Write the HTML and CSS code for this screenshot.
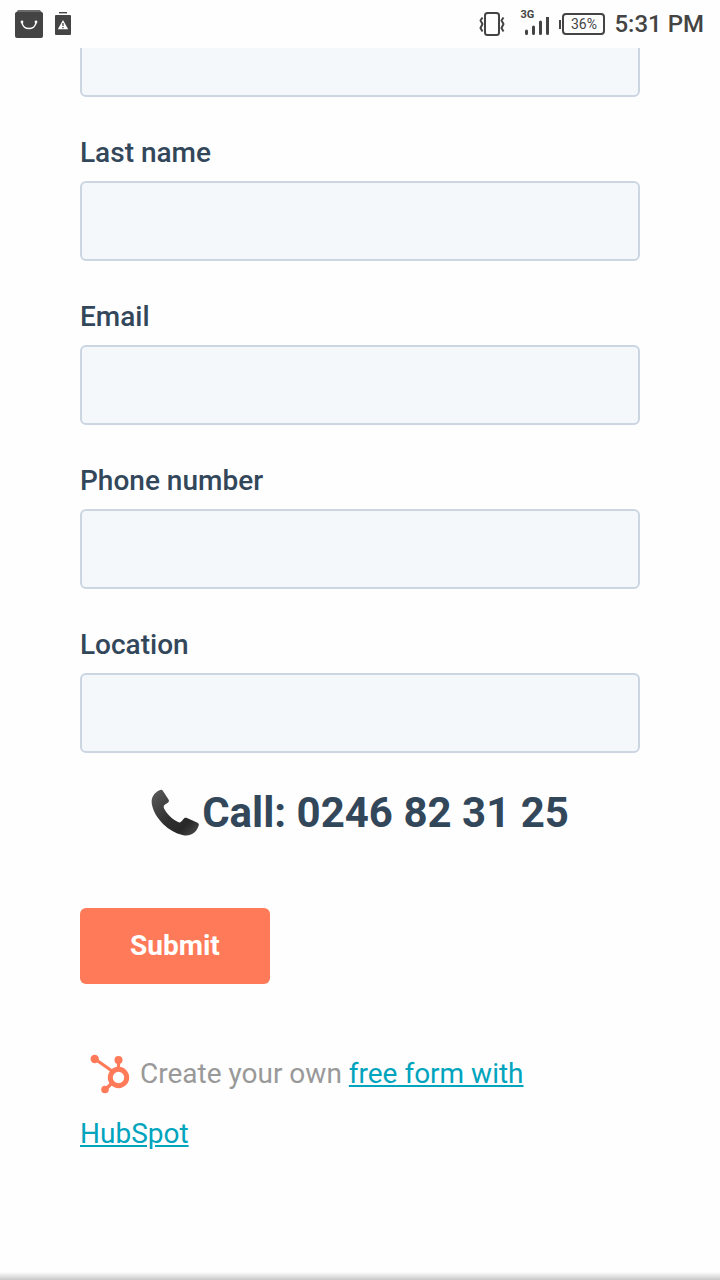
FILE: index.html
```html
<!DOCTYPE html>
<html lang="en">
<head>
<meta charset="utf-8">
<meta name="viewport" content="width=device-width, initial-scale=1">
<title>Contact form</title>
<link rel="stylesheet" href="styles.css">
</head>
<body>
<header class="status-bar">
  <svg class="icon-bag" viewBox="0 0 28 28" aria-hidden="true">
    <path d="M3 0h22l3 4H0z" fill="#6b6b6b"/>
    <rect y="2" width="28" height="26" rx="2" fill="#444"/>
    <path d="M7 12.500c1 8 13 8 14 0" fill="none" stroke="#fff" stroke-width="1.600"/>
    <circle cx="7" cy="12" r="1.400" fill="#fff"/><circle cx="21" cy="12" r="1.400" fill="#fff"/>
  </svg>
  <svg class="icon-alert" viewBox="0 0 16 24" aria-hidden="true">
    <path d="M4 .7h8" stroke="#444" stroke-width="1.400"/>
    <rect y="3" width="16" height="20" rx="1" fill="#444"/>
    <path d="M8 8l5.200 9.200H2.800z" fill="#fff"/>
    <path d="M8 11v3M8 15v1.200" stroke="#444" stroke-width="1.300"/>
  </svg>
  <svg class="icon-vibrate" viewBox="0 0 28 26" aria-hidden="true" fill="none" stroke="#444" stroke-width="2">
    <rect x="6" y="2" width="14" height="22" rx="2.500"/>
    <path d="M3.500 6.500L1.500 9.500l2 3.500-2 4 2 3.500M24.500 6.500l-2 3 2 3.500-2 4 2 3.500" stroke-linejoin="round"/>
  </svg>
  <div class="signal">
    <span class="network">3G</span>
    <svg class="icon-bars" viewBox="0 0 30 20" aria-hidden="true" stroke="#444" stroke-width="3" stroke-linecap="round">
      <path d="M5.500 14v2.500M12.500 10v6.500M19.500 5v11.500M26.500 0.500v16"/>
    </svg>
  </div>
  <div class="battery"><span class="level">36%</span></div>
  <time class="clock">5:31 PM</time>
</header>
<main class="page">
  <form class="form">
    <input class="field" type="text" aria-label="First name">
    <label class="label" for="last">Last name</label>
    <input class="field" id="last" type="text">
    <label class="label" for="email">Email</label>
    <input class="field" id="email" type="email">
    <label class="label" for="phone">Phone number</label>
    <input class="field" id="phone" type="tel">
    <label class="label" for="location">Location</label>
    <input class="field" id="location" type="text">
    <h1 class="call">
      <svg class="icon-phone" viewBox="0 0 48 48" aria-hidden="true">
        <defs><linearGradient id="handset" x1="0" y1="0" x2="1" y2="1"><stop offset="0" stop-color="#5c5c5c"/><stop offset=".5" stop-color="#303030"/><stop offset=".75" stop-color="#282828"/><stop offset="1" stop-color="#505050"/></linearGradient></defs>
        <path d="M8 1.500C10 .500 11 .500 12 2l5.500 8.500c.8 1.500.5 2.500-1 3.500l-2.500 1.500c-1.500 1-1.700 2.500-.7 4.500C16 25 21 30 27 33c1.500.8 2.800.5 3.800-1L32.500 30c1-1.500 2.500-1.500 4-.8L46 33.500c2 1 2.300 2 1.300 4C45 44 39 48 31.500 46 18 43 4 30 1 16 -.5 9 3 4 8 1.500z" fill="url(#handset)"/>
      </svg>Call: 0246 82 31 25</h1>
    <button class="submit" type="submit">Submit</button>
  </form>
  <p class="credit">
    <svg class="icon-sprocket" viewBox="0 0 40 40" aria-hidden="true" fill="none" stroke="#ff7a59">
      <circle cx="28.500" cy="23.500" r="8.200" stroke-width="5"/>
      <path d="M28.500 15V6M22 17L5 5M22 29l-6 6" stroke-width="3.200"/>
      <g fill="#ff7a59" stroke="none"><circle cx="28.500" cy="6" r="4"/><circle cx="4.700" cy="5" r="4.200"/><circle cx="15" cy="35.500" r="3.800"/></g>
    </svg>Create your own <a class="link" href="#">free form with HubSpot</a>
  </p>
</main>
<div class="edge"></div>
</body>
</html>
```
FILE: styles.css
```css
* {
  box-sizing: border-box;
}

body {
  margin: 0;
  min-height: 100vh;
  display: flex;
  flex-direction: column;
  background: #fefefe;
  color: #33475b;
  font-family: Roboto, sans-serif;
}

.status-bar {
  display: flex;
  align-items: center;
  height: 48px;
  padding: 0 16px 0 15px;
  color: #444;
}

.icon-bag {
  width: 28px;
  height: 28px;
  margin-right: 12px;
}

.icon-alert {
  width: 16px;
  height: 24px;
}

.icon-vibrate {
  width: 28px;
  height: 26px;
  margin-left: auto;
  margin-right: 14px;
}

.signal {
  position: relative;
  display: flex;
  align-items: flex-end;
  width: 30px;
  height: 26px;
  margin-right: 8px;
}

.icon-bars {
  width: 30px;
  height: 20px;
}

.network {
  position: absolute;
  top: -2px;
  left: -1px;
  font-size: 11px;
  line-height: 12px;
  font-weight: 700;
}

.battery {
  display: flex;
  align-items: center;
  margin-right: 9px;
}

.battery::before {
  content: "";
  width: 2px;
  height: 9px;
  margin-right: 1px;
  background: #444;
}

.level {
  width: 43px;
  border: 2px solid #444;
  border-radius: 4px;
  font-size: 14px;
  line-height: 18px;
  text-align: center;
}

.clock {
  font-size: 24px;
  line-height: 28px;
  font-weight: 500;
}

.page {
  flex: 1;
  padding: 0 80px;
  overflow: hidden;
}

/* The first field is scrolled partly under the status bar. */
.form {
  display: flex;
  flex-direction: column;
  margin-top: -31px;
}

.field {
  width: 100%;
  height: 80px;
  padding: 0 20px;
  border: 2px solid #cbd6e2;
  border-radius: 6px;
  background: #f5f8fa;
  color: inherit;
  font: inherit;
  font-size: 28px;
}

.label {
  margin: 36px 0 8px;
  font-size: 28px;
  line-height: 40px;
  font-weight: 500;
}

.call {
  display: flex;
  align-items: center;
  justify-content: center;
  gap: 3px;
  margin: 30px 0 65px;
  font-size: 42px;
  line-height: 60px;
  font-weight: 700;
}

.icon-phone {
  width: 48px;
  height: 48px;
}

.submit {
  align-self: flex-start;
  height: 76px;
  padding: 0 50px 2px;
  border: 0;
  border-radius: 6px;
  background: #ff7a59;
  color: #fff;
  font-family: inherit;
  font-size: 28px;
  font-weight: 700;
}

.credit {
  margin: 60px 0;
  padding-right: 16px;
  color: #999;
  font-size: 28px;
  line-height: 60px;
}

.icon-sprocket {
  width: 40px;
  height: 40px;
  margin: 0 10px 4px;
  vertical-align: middle;
}

.link {
  color: #00a4bd;
}

.edge {
  height: 8px;
  background: linear-gradient(#fefefe, #c8c8c8);
}
```
